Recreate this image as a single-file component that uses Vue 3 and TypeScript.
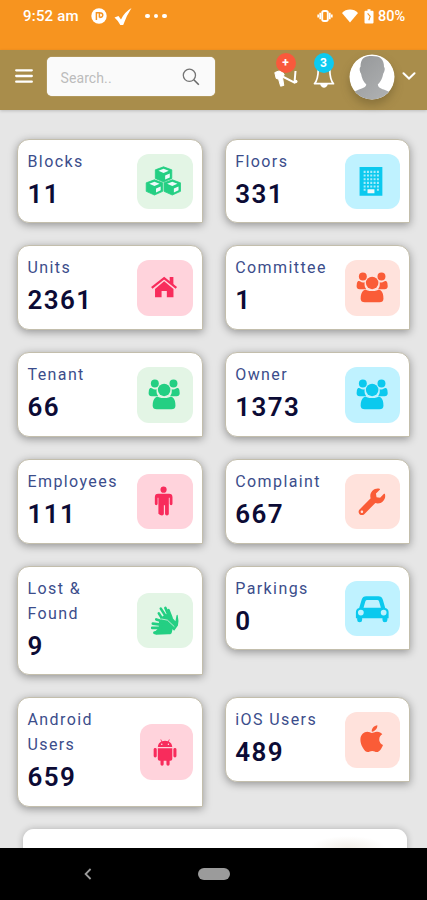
<script setup lang="ts">
type Icon = 'cubes' | 'building' | 'home' | 'users' | 'man' | 'wrench' | 'hands' | 'car' | 'android' | 'apple'
type Tone = 'green' | 'cyan' | 'pink' | 'orange'

interface Stat {
  lines: string[]
  value: string
  icon: Icon
  tone: Tone
}

const stats: Stat[] = [
  { lines: ['Blocks'], value: '11', icon: 'cubes', tone: 'green' },
  { lines: ['Floors'], value: '331', icon: 'building', tone: 'cyan' },
  { lines: ['Units'], value: '2361', icon: 'home', tone: 'pink' },
  { lines: ['Committee'], value: '1', icon: 'users', tone: 'orange' },
  { lines: ['Tenant'], value: '66', icon: 'users', tone: 'green' },
  { lines: ['Owner'], value: '1373', icon: 'users', tone: 'cyan' },
  { lines: ['Employees'], value: '111', icon: 'man', tone: 'pink' },
  { lines: ['Complaint'], value: '667', icon: 'wrench', tone: 'orange' },
  { lines: ['Lost &', 'Found'], value: '9', icon: 'hands', tone: 'green' },
  { lines: ['Parkings'], value: '0', icon: 'car', tone: 'cyan' },
  { lines: ['Android', 'Users'], value: '659', icon: 'android', tone: 'pink' },
  { lines: ['iOS Users'], value: '489', icon: 'apple', tone: 'orange' },
]

const cubes = [
  [26.8, 20.5],
  [17.6, 33.6],
  [35.6, 33.6],
]
</script>

<template>
  <div class="screen">
    <div class="status">
      <span class="clock">9:52 am</span>
      <svg class="st-app" viewBox="0 0 16 16"><circle cx="8" cy="8" r="7.7" fill="#fff" /><path d="M5.4 12V4.8h3v4.6M8.4 4.8q3.4 0 3.4 2.300T8.400 9.400" fill="none" stroke="#f7941f" stroke-width="1.5" /></svg>
      <svg class="st-check" viewBox="0 0 18 18"><path d="M.5 9.500 4.500 8l2.500 3.500Q10.500 4 17.500 0q-5 7.500-8.300 17H6.300Q4 12.500.5 9.500z" fill="#fff" /></svg>
      <span class="dots"><i></i><i></i><i></i></span>
      <span class="grow"></span>
      <svg class="st-vib" viewBox="0 0 16 14"><rect x="5.200" y="2" width="5.600" height="10" rx="1.800" fill="none" stroke="#fff" stroke-width="1.900" /><path d="M3.200 3.800v6.400M12.800 3.800v6.400M1.200 5.600v2.800M14.800 5.600v2.800" stroke="#fff" stroke-width="1.700" /></svg>
      <svg class="st-wifi" viewBox="0 0 16 14"><path d="M0 4C4-.6 12-.6 16 4L8 13.500z" fill="#fff" /></svg>
      <svg class="st-bat" viewBox="0 0 10 15"><path d="M1.500 1.800h2V.2h3v1.600h2q1 0 1 1v10.800q0 1-1 1h-7q-1 0-1-1V2.800q0-1 1-1z" fill="#fff" /><path d="m3.600 4.400 2.600 3-1.400 3.800" fill="none" stroke="#f7941f" stroke-width="1.100" /></svg>
      <span class="pct">80%</span>
    </div>

    <header class="bar">
      <svg class="burger" viewBox="0 0 18 16"><path d="M1.200 2.300h15.600M1.200 8h15.600M1.200 13.700h15.600" stroke="#fff" stroke-width="2.300" stroke-linecap="round" /></svg>
      <div class="search">
        <span>Search..</span>
        <svg viewBox="0 0 18 18"><circle cx="7.400" cy="7.300" r="6.100" fill="none" stroke="#747474" stroke-width="1.300" /><path d="m11.800 11.800 5 5" stroke="#686868" stroke-width="1.600" /></svg>
      </div>
      <div class="action horn">
        <svg viewBox="0 0 24 20"><path d="M.8 3.600Q4 1.800 7.500 1.800L10.200 5.400 8.600 9l1.200 7.400-3.200.8-2-7-2.400-.8z" fill="#fff" stroke="#fff" /><path d="m8.500 7.500 12 6.200 1-11.700" fill="none" stroke="#fff" stroke-width="2" stroke-linejoin="round" /><circle cx="21.800" cy="12.500" r="1.700" fill="#fff" /></svg>
        <b class="badge red">+</b>
      </div>
      <div class="action bell">
        <svg viewBox="0 0 22 20"><path d="M5.200 0C5.300 7.500 4 11.600 1.500 14.700h19C18 11.600 16.700 7.500 16.800 0" fill="none" stroke="#fff" stroke-width="1.700" stroke-linejoin="round" /><path d="M7.200 15h7.600c-1 5-6.600 5-7.600 0z" fill="#fff" /></svg>
        <b class="badge blue">3</b>
      </div>
      <svg class="avatar" viewBox="0 0 46 46">
        <defs>
          <clipPath id="face"><circle cx="23" cy="23" r="22.500" /></clipPath>
          <linearGradient id="grey" x1="0" y1="0" x2="1" y2="1"><stop offset="0" stop-color="#939597" /><stop offset="1" stop-color="#b3b5b6" /></linearGradient>
        </defs>
        <circle cx="23" cy="23" r="22.500" fill="#fff" />
        <path clip-path="url(#face)" d="M11.500 13C11.600 4.500 15 2 23 2s12 3 12 11c1.300.8.800 4.300-.7 6.500-1 5-2.500 8-5.500 11 .4 3.300 3 4 6 5l12 5v6H-1v-6l11-5c4-1.500 6.800-2 7.300-5-3-3-4.500-6.300-5.300-11-1.400-1.500-1.900-5.800-.5-6.500z" fill="url(#grey)" />
      </svg>
      <svg class="chev" viewBox="0 0 14 8"><path d="M1.500 1.300 7 6.500l5.500-5.200" fill="none" stroke="#fff" stroke-width="2" stroke-linecap="round" /></svg>
    </header>

    <main class="content">
      <div class="grid">
        <section v-for="s in stats" :key="s.lines[0]" class="card" :class="{ tall: s.lines.length > 1 }">
          <div class="text">
            <div v-for="l in s.lines" :key="l" class="label">{{ l }}</div>
            <div class="value">{{ s.value }}</div>
          </div>
          <div class="tile" :class="[s.tone, { narrow: s.icon === 'android' }]">
            <svg viewBox="0 0 56 56" fill="currentColor">
              <g v-if="s.icon === 'cubes'">
                <g v-for="(c, i) in cubes" :key="i" :transform="`translate(${c[0]} ${c[1]})`">
                  <path d="M0-7.600 8.300-4.500v8.600L0 7.800-8.300 4.100v-8.600z" stroke="currentColor" stroke-width=".8" stroke-linejoin="round" />
                  <path d="M0-5.700 5.200-3.600 0-1.400-5.200-3.600zM1.600 1.200 6.300-.9v4L1.600 5.200z" class="cut" />
                </g>
              </g>
              <g v-else-if="s.icon === 'building'">
                <path d="M14.700 13h23v29h-23z" />
                <path d="M18.800 18h15.400M18.800 21.700h15.400M18.800 25.400h15.400M18.800 29.100h15.400M18.800 32.800h15.400M18.800 36h2M32.200 36h2" class="windows" />
                <path d="M22.700 35.500h7v4.200h-7z" class="cut" />
              </g>
              <g v-else-if="s.icon === 'home'">
                <path d="m27.400 21.500 9.400 7.800v8.200h-6.700v-6.200h-5.300v6.200h-6.600v-8.200z" />
                <path d="m14.900 28.200 12.500-10 12.300 10" fill="none" stroke="currentColor" stroke-width="2.200" />
                <path d="M33 17.200h3.700v8L33 22z" />
              </g>
              <g v-else-if="s.icon === 'users'" transform="translate(0 -.5)">
                <circle cx="18" cy="17.200" r="4" /><circle cx="36.800" cy="17.200" r="4" /><circle cx="27.400" cy="23.600" r="6.300" />
                <path d="M13.200 21.800q1.500-.5 2.300.4 2 1.500 4.300.7-.6 4.400 1.700 7h-6.700q-3-.2-3.100-3 0-4 1.500-5.100zM41.600 21.800q-1.500-.5-2.300.4-2 1.500-4.300.7.600 4.400-1.700 7H40q3-.2 3.100-3 0-4-1.500-5.100z" />
                <path d="M19 31c2-1.700 3 .9 8.300.9S33.800 29.300 35.800 31c2.400 1.500 3 5 3 8.500 0 2.500-1.500 3.600-4 3.600H20c-2.600 0-4.200-1.100-4.200-3.600 0-3.500.8-7 3.200-8.500z" />
              </g>
              <g v-else-if="s.icon === 'man'">
                <circle cx="26.800" cy="15.800" r="3.100" />
                <path d="M21.300 20h11q3.500 0 3.500 3.400V30q0 1.500-1.400 1.500T33 30v-6h-.9v16q0 1.800-1.900 1.800T28.300 40v-8.500h-1.200V40q0 1.800-1.900 1.800T21.600 40V24h-.8v6q0 1.500-1.400 1.500T18 30v-6.600Q18 20 21.300 20z" />
              </g>
              <path v-else-if="s.icon === 'wrench'" transform="translate(13.700 14.600) scale(.0525)" d="M507.730 109.100c-2.240-9.030-13.540-12.090-20.120-5.510l-74.360 74.360-67.880-11.310-11.310-67.880 74.360-74.360c6.620-6.620 3.430-17.900-5.660-20.160-47.380-11.740-99.550.91-136.580 37.930-39.640 39.640-50.550 97.100-34.050 147.200L18.740 402.760c-24.990 24.990-24.990 65.510 0 90.500 24.990 24.990 65.510 24.990 90.500 0l213.210-213.210c50.120 16.710 107.470 5.680 147.370-34.220 37.070-37.070 49.700-89.320 37.910-136.730zM64 472c-13.250 0-24-10.750-24-24 0-13.260 10.750-24 24-24s24 10.740 24 24c0 13.250-10.750 24-24 24z" />
              <g v-else-if="s.icon === 'hands'">
                <path d="m23.500 25.500 5-4 5-.5 3 5 2.300 2.500 1-5.500q.5-1.500 1.300-.6 1.300 5.500.2 10.500L37.500 38z" />
                <path d="m25.500 26-3.500-5.500m7 3-5-7.700m8.300 7.700-3.700-8.500m6 9.500-2.800-7.200" fill="none" stroke="currentColor" stroke-width="2.600" stroke-linecap="round" />
                <path d="M22.200 28.200q2-.5 4.300-.3l3-.1 7 6.300-1.600 6.400q-1 1.200-3.400 1.200L19 42l-2-2 5-5z" />
                <path d="m27 29-7.500-2.300m4.700 5.200-8.200-1m8 4.300h-8.600m8.600 4.400-6.400.5" fill="none" stroke="currentColor" stroke-width="2.800" stroke-linecap="round" />
                <path d="m24.500 26.200 6.200 1.200 7 6.600" fill="none" class="seam" />
              </g>
              <path v-else-if="s.icon === 'car'" fill-rule="evenodd" d="m14.300 27.200 2.500-8.200q1-3.500 4.600-3.500h12.200q3.600 0 4.600 3.500l2.400 8.200q3.400.8 3.400 4.400v6h-1.200v1.700q0 2.200-2.500 2.200t-2.500-2.200v-1.700H17.300v1.700q0 2.200-2.500 2.200t-2.500-2.200v-1.700H11v-6q0-3.600 3.300-4.400zm4.400-.3h17.500l-1.800-6.200q-.5-1.500-1.800-1.500H22.300q-1.300 0-1.800 1.500zM16 28.900a2.900 2.900 0 1 0 0 5.800 2.900 2.900 0 0 0 0-5.800zm23 0a2.900 2.900 0 1 0 0 5.800 2.900 2.900 0 0 0 0-5.800z" />
              <g v-else-if="s.icon === 'android'" transform="translate(1.500 0)">
                <path d="M18.500 23.300c.2-3 1.500-4.700 3.600-5.700l-1-1.800.6-.3 1.100 1.900q3-1 6 0l1.100-1.900.6.300-1 1.800c2.100 1 3.400 2.700 3.600 5.700zM18.500 24.400h14.600v10.800q0 1.800-1.800 1.800h-.9v3.600q0 1.500-1.600 1.500t-1.600-1.500V37h-2.800v3.600q0 1.500-1.600 1.500t-1.600-1.500V37h-.9q-1.800 0-1.800-1.800z" />
                <rect x="14.300" y="24.200" width="3.100" height="9.600" rx="1.500" /><rect x="34.200" y="24.200" width="3.100" height="9.600" rx="1.500" />
                <circle cx="22.500" cy="20.500" r=".7" class="cut" /><circle cx="29.200" cy="20.500" r=".7" class="cut" />
              </g>
              <path v-else transform="translate(15.300 11.400) scale(.0605)" d="M318.700 268.700c-.2-36.700 16.400-64.400 50-84.800-18.800-26.900-47.200-41.700-84.700-44.600-35.500-2.800-74.300 20.700-88.500 20.700-15 0-49.400-19.700-76.400-19.700C63.300 141.200 4 184.800 4 273.500q0 39.300 14.400 81.200c12.800 36.700 59 126.700 107.200 125.200 25.200-.6 43-17.900 75.800-17.900 31.800 0 48.300 17.900 76.400 17.900 48.600-.7 90.400-82.500 102.600-119.300-65.200-30.700-61.700-90-61.700-91.900zm-56.600-164.200c27.300-32.400 24.800-61.900 24-72.500-24.100 1.400-52 16.400-67.900 34.900-17.500 19.800-27.800 44.300-25.600 71.900 26.100 2 49.900-11.400 69.500-34.300z" />
            </svg>
          </div>
        </section>
      </div>
      <div class="panel"></div>
    </main>

    <nav class="nav">
      <svg class="back" viewBox="0 0 8 12"><path d="M6.600 1 1.600 6l5 5" fill="none" stroke="#9b9b9b" stroke-width="1.800" /></svg>
      <span class="pill"></span>
    </nav>
  </div>
</template>

<style>
body {
  margin: 0;
  overflow: hidden;
}
</style>

<style scoped>
.screen {
  width: 427px;
  height: 900px;
  display: flex;
  flex-direction: column;
  overflow: hidden;
  background: #e6e6e6;
  font-family: Roboto, "Liberation Sans", sans-serif;
}
.screen svg {
  display: block;
  flex: none;
}
.status {
  flex: none;
  height: 49.5px;
  box-sizing: border-box;
  padding: 6px 19px 0 23px;
  display: flex;
  align-items: flex-start;
  background: #f7941f;
  color: #fff;
  font-size: 15px;
  font-weight: 500;
  line-height: 21px;
}
.clock {
  width: 68px;
  letter-spacing: 0.2px;
  white-space: nowrap;
}
.st-app {
  width: 16px;
  height: 16px;
  margin-top: 2px;
}
.st-check {
  width: 18px;
  height: 18px;
  margin: 1.5px 0 0 7px;
}
.dots {
  display: flex;
  gap: 4px;
  margin: 7.5px 0 0 13px;
}
.dots i {
  width: 4.5px;
  height: 4.5px;
  border-radius: 50%;
  background: #fff;
}
.grow {
  flex: 1;
}
.st-vib {
  width: 16px;
  height: 14px;
  margin-top: 3px;
}
.st-wifi {
  width: 16px;
  height: 14px;
  margin: 3px 0 0 9px;
}
.st-bat {
  width: 10px;
  height: 15px;
  margin: 2.5px 4px 0 6px;
}
.pct {
  font-size: 14.5px;
  width: 30px;
}
.bar {
  flex: none;
  height: 60.5px;
  box-sizing: border-box;
  display: flex;
  align-items: flex-start;
  padding-left: 15px;
  background: #a98d4b;
  position: relative;
  box-shadow: 0 1px 3px rgba(0, 0, 0, 0.18);
}
.burger {
  width: 18px;
  height: 16px;
  margin-top: 18.5px;
}
.search {
  width: 167.5px;
  height: 39px;
  margin: 7.5px 0 0 14px;
  padding: 0 15px 0 13.5px;
  box-sizing: border-box;
  display: flex;
  align-items: center;
  justify-content: space-between;
  border-radius: 5px;
  background: #fafafa;
  color: #bcbcbc;
  font-size: 14px;
  letter-spacing: 0.1px;
  box-shadow: 0 0 1px #fff;
}
.search span {
  padding-top: 3px;
}
.search svg {
  width: 18px;
  height: 18px;
}
.action {
  position: relative;
  margin-top: 18px;
}
.horn {
  margin-left: 59px;
}
.horn svg {
  width: 24px;
  height: 20px;
  margin-top: 1px;
}
.bell {
  margin-left: 15px;
}
.bell svg {
  width: 22px;
  height: 20px;
  margin-top: 1px;
}
.badge {
  position: absolute;
  top: -14.5px;
  left: 50%;
  width: 20px;
  height: 20px;
  margin-left: -10px;
  border-radius: 50%;
  color: #fff;
  font-size: 12px;
  line-height: 20px;
  text-align: center;
}
.red {
  background: #f9593c;
}
.blue {
  background: #0dcaf0;
}
.avatar {
  width: 46px;
  height: 46px;
  margin: 4.5px 0 0 14.5px;
  border-radius: 50%;
  filter: drop-shadow(0 5px 5px rgba(60, 50, 20, 0.3));
}
.chev {
  width: 14px;
  height: 8px;
  margin: 22.5px 0 0 6.5px;
}
.content {
  flex: 1;
  min-height: 0;
  overflow: hidden;
  padding: 28.5px 16px 0 17.2px;
}
.grid {
  display: grid;
  grid-template-columns: 185.5px 185.5px;
  column-gap: 22.3px;
  row-gap: 22px;
  align-items: start;
}
.card {
  height: 84.8px;
  box-sizing: border-box;
  display: flex;
  justify-content: space-between;
  align-items: flex-start;
  padding: 9px 9px 0 9.3px;
  border: 1px solid #c3beac;
  border-radius: 12px 12px 0 12px;
  background: #fff;
  box-shadow: 0 2px 9px rgba(0, 0, 0, 0.36);
}
.tall {
  height: 109.6px;
}
.label {
  height: 25px;
  line-height: 25px;
  font-size: 16px;
  letter-spacing: 1.4px;
  color: #3b4d8b;
  white-space: nowrap;
}
.value {
  height: 40px;
  line-height: 40px;
  font-size: 26px;
  font-weight: 600;
  letter-spacing: 1.4px;
  color: #0c0b35;
}
.tile {
  width: 55.5px;
  height: 55.5px;
  margin-top: 5px;
  display: flex;
  justify-content: center;
  overflow: hidden;
  border-radius: 12px;
}
.tall .tile {
  margin-top: 17px;
}
.tile svg {
  width: 55.5px;
  height: 55.5px;
}
.tile.narrow {
  width: 53px;
}
.green {
  background: #e3f5e5;
  color: #24cf83;
}
.cyan {
  background: #bff2ff;
  color: #0bc9ee;
}
.pink {
  background: #ffd3dc;
  color: #f82c5c;
}
.orange {
  background: #ffe2dc;
  color: #fa5c37;
}
.cut {
  fill: #eefafa;
}
.windows {
  fill: none;
  stroke: #a6ecfb;
  stroke-width: 2.1;
  stroke-dasharray: 2 1.35;
}
.seam {
  stroke: #e3f5e5;
  stroke-width: 0.8;
}
.panel {
  height: 60px;
  margin: 22.5px 4.5px 0 5.8px;
  border-radius: 11px;
  background: radial-gradient(ellipse 38px 12px at 325px 19px, #f2eee8, #fff);
  box-shadow: 0 0 7px rgba(0, 0, 0, 0.24);
}
.nav {
  flex: none;
  height: 52.5px;
  display: flex;
  align-items: center;
  box-sizing: border-box;
  padding-left: 84px;
  background: #000;
}
.back {
  width: 8px;
  height: 12px;
}
.pill {
  width: 32px;
  height: 12.5px;
  margin-left: 106px;
  border-radius: 7px;
  background: #9b9b9b;
}
</style>
